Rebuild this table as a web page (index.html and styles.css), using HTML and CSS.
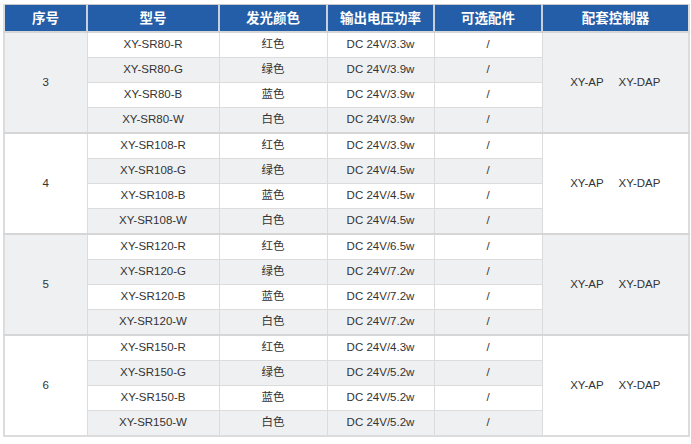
FILE: index.html
```html
<!DOCTYPE html>
<html lang="zh">
<head>
<meta charset="utf-8">
<title>产品参数</title>
<link rel="stylesheet" href="styles.css">
</head>
<body>
<div class="wrap">
<table class="spec">
  <colgroup>
    <col class="c1"><col class="c2"><col class="c3"><col class="c4"><col class="c5"><col class="c6">
  </colgroup>
  <thead>
    <tr><th>序号</th><th>型号</th><th>发光颜色</th><th>输出电压功率</th><th>可选配件</th><th>配套控制器</th></tr>
  </thead>
  <tbody class="grp odd">
    <tr class="first"><td rowspan="4" class="num">3</td><td>XY-SR80-R</td><td>红色</td><td>DC 24V/3.3w</td><td>/</td><td rowspan="4" class="ctl"><span>XY-AP</span><span class="sep">XY-DAP</span></td></tr>
    <tr class="alt"><td>XY-SR80-G</td><td>绿色</td><td>DC 24V/3.9w</td><td>/</td></tr>
    <tr><td>XY-SR80-B</td><td>蓝色</td><td>DC 24V/3.9w</td><td>/</td></tr>
    <tr class="alt"><td>XY-SR80-W</td><td>白色</td><td>DC 24V/3.9w</td><td>/</td></tr>
  </tbody>
  <tbody class="grp">
    <tr class="first"><td rowspan="4" class="num">4</td><td>XY-SR108-R</td><td>红色</td><td>DC 24V/3.9w</td><td>/</td><td rowspan="4" class="ctl"><span>XY-AP</span><span class="sep">XY-DAP</span></td></tr>
    <tr class="alt"><td>XY-SR108-G</td><td>绿色</td><td>DC 24V/4.5w</td><td>/</td></tr>
    <tr><td>XY-SR108-B</td><td>蓝色</td><td>DC 24V/4.5w</td><td>/</td></tr>
    <tr class="alt"><td>XY-SR108-W</td><td>白色</td><td>DC 24V/4.5w</td><td>/</td></tr>
  </tbody>
  <tbody class="grp odd">
    <tr class="first"><td rowspan="4" class="num">5</td><td>XY-SR120-R</td><td>红色</td><td>DC 24V/6.5w</td><td>/</td><td rowspan="4" class="ctl"><span>XY-AP</span><span class="sep">XY-DAP</span></td></tr>
    <tr class="alt"><td>XY-SR120-G</td><td>绿色</td><td>DC 24V/7.2w</td><td>/</td></tr>
    <tr><td>XY-SR120-B</td><td>蓝色</td><td>DC 24V/7.2w</td><td>/</td></tr>
    <tr class="alt"><td>XY-SR120-W</td><td>白色</td><td>DC 24V/7.2w</td><td>/</td></tr>
  </tbody>
  <tbody class="grp">
    <tr class="first"><td rowspan="4" class="num">6</td><td>XY-SR150-R</td><td>红色</td><td>DC 24V/4.3w</td><td>/</td><td rowspan="4" class="ctl"><span>XY-AP</span><span class="sep">XY-DAP</span></td></tr>
    <tr class="alt"><td>XY-SR150-G</td><td>绿色</td><td>DC 24V/5.2w</td><td>/</td></tr>
    <tr><td>XY-SR150-B</td><td>蓝色</td><td>DC 24V/5.2w</td><td>/</td></tr>
    <tr class="alt"><td>XY-SR150-W</td><td>白色</td><td>DC 24V/5.2w</td><td>/</td></tr>
  </tbody>
</table>
</div>
</body>
</html>
```

FILE: styles.css
```css
html, body {
  margin: 0;
  padding: 0;
  background: #ffffff;
}

.wrap {
  padding: 4px 3px 0 3px;
}

.spec {
  width: 685px;
  table-layout: fixed;
  border-collapse: collapse;
  font-family: "Liberation Sans", Arial, "Noto Sans CJK SC", sans-serif;
  font-size: 11.5px;
  color: #333333;
  border: 2px solid #dcdcdc;
  border-top: 1px solid #c8c8c8;
}

.c1 { width: 83px; }
.c2 { width: 132px; }
.c3 { width: 108px; }
.c4 { width: 107px; }
.c5 { width: 108px; }
.c6 { width: 147px; }

.spec th {
  height: 26px;
  padding: 0;
  background: #245da8;
  color: #ffffff;
  font-family: "Noto Sans CJK SC", sans-serif;
  font-size: 13.5px;
  font-weight: bold;
  text-align: center;
  vertical-align: middle;
  border-left: 2px solid #c7d0dc;
  border-bottom: 1px solid #d6dbe2;
  line-height: 1;
}

.spec th:first-child {
  border-left: 0;
}

.spec td {
  height: 24px;
  padding: 0;
  text-align: center;
  vertical-align: middle;
  border: 1px solid #dcdcdc;
  background: #ffffff;
  line-height: 1;
}

.spec tr.alt td {
  background: #eff0f2;
}

.spec tbody.grp {
  border-top: 2px solid #d6d6d6;
}

.spec tbody.odd td.num,
.spec tbody.odd td.ctl {
  background: #eff0f2;
}

.ctl .sep {
  margin-left: 15px;
}
```
